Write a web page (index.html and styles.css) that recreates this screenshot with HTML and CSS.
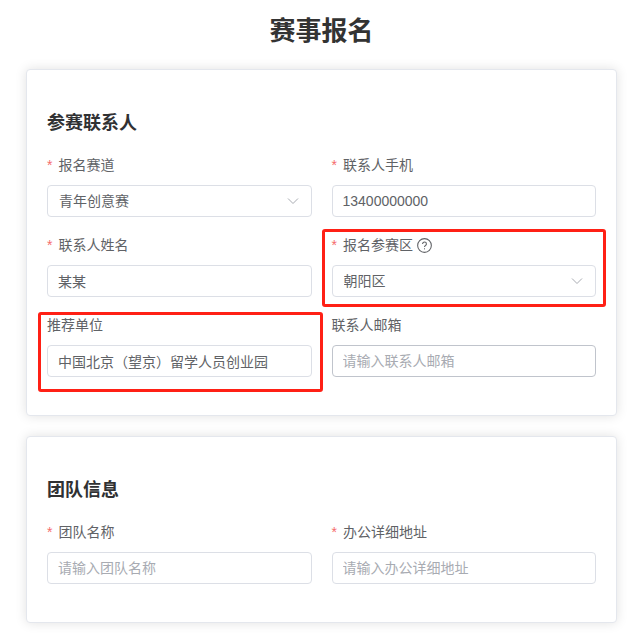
FILE: index.html
```html
<!DOCTYPE html>
<html lang="zh-CN">
<head>
    <meta charset="UTF-8">
    <meta name="viewport" content="width=device-width, initial-scale=1.0">
    <title>赛事报名</title>
    <link rel="stylesheet" href="styles.css">
</head>
<body>
    <h1>赛事报名</h1>
    <form id="entryForm">
        <section class="card">
            <h2>参赛联系人</h2>
            <div class="fields">
                <div class="field">
                    <label class="required" for="track">报名赛道</label>
                    <div class="select">
                        <select id="track" name="track" required>
                            <option selected>青年创意赛</option>
                        </select>
                        <svg class="arrow" viewBox="0 0 14 14" aria-hidden="true"><path d="M2 4.5 7 9.5 12 4.5"/></svg>
                    </div>
                </div>
                <div class="field">
                    <label class="required" for="phone">联系人手机</label>
                    <input type="tel" id="phone" name="phone" value="13400000000" required>
                </div>
                <div class="field">
                    <label class="required" for="contact">联系人姓名</label>
                    <input type="text" id="contact" name="contact" value="某某" required>
                </div>
                <div class="field marked">
                    <label class="required" for="region">报名参赛区
                        <svg class="help" viewBox="0 0 14 14" aria-hidden="true">
                            <circle cx="7" cy="7" r="6.4"/>
                            <path d="M5.2 5.7C5.2 4.5 6 3.8 7 3.8s1.8.7 1.8 1.7c0 .8-.4 1.1-.9 1.5-.6.4-.9.7-.9 1.4"/>
                            <path d="M7 9.6v1"/>
                        </svg>
                    </label>
                    <div class="select">
                        <select id="region" name="region" required>
                            <option selected>朝阳区</option>
                        </select>
                        <svg class="arrow" viewBox="0 0 14 14" aria-hidden="true"><path d="M2 4.5 7 9.5 12 4.5"/></svg>
                    </div>
                </div>
                <div class="field marked marked-low">
                    <label for="referrer">推荐单位</label>
                    <input type="text" id="referrer" name="referrer" value="中国北京（望京）留学人员创业园">
                </div>
                <div class="field">
                    <label for="email">联系人邮箱</label>
                    <input class="active" type="email" id="email" name="email" placeholder="请输入联系人邮箱">
                </div>
            </div>
        </section>

        <section class="card">
            <h2>团队信息</h2>
            <div class="fields">
                <div class="field">
                    <label class="required" for="team">团队名称</label>
                    <input type="text" id="team" name="team" placeholder="请输入团队名称" required>
                </div>
                <div class="field">
                    <label class="required" for="address">办公详细地址</label>
                    <input type="text" id="address" name="address" placeholder="请输入办公详细地址" required>
                </div>
            </div>
        </section>
    </form>
</body>
</html>
```
FILE: styles.css
```css
* {
    box-sizing: border-box;
}
body {
    margin: 0;
    padding: 13px 24px 15px 26px;
    background: #fff;
    color: #303133;
    font-family: "Liberation Sans", "Noto Sans CJK SC", sans-serif;
    font-size: 14px;
}
h1 {
    margin: 0 0 20px;
    font-size: 26px;
    line-height: 36px;
    text-align: center;
    color: #333;
}
.card {
    padding: 20px 20px 38px;
    border: 1px solid #e4e7ed;
    border-radius: 4px;
    background: #fff;
    box-shadow: 0 0 12px rgba(0, 0, 0, 0.12);
}
.card + .card {
    margin-top: 20px;
}
h2 {
    margin: 20px 0 18px;
    font-size: 18px;
    line-height: 26px;
}
.fields {
    display: grid;
    grid-template-columns: 1fr 1fr;
    gap: 17px 20px;
}
.field {
    position: relative;
    min-width: 0;
}
label {
    display: flex;
    align-items: center;
    margin-bottom: 9px;
    line-height: 22px;
    color: #606266;
}
.required::before {
    content: "*";
    margin-right: 6px;
    color: #f56c6c;
}
.help {
    width: 15px;
    height: 15px;
    margin-left: 4px;
    fill: none;
    stroke: #606266;
    stroke-width: 1;
}
input, select {
    display: block;
    width: 100%;
    height: 32px;
    padding: 0 11px;
    border: 1px solid #dcdfe6;
    border-radius: 4px;
    outline: none;
    background: #fff;
    color: #606266;
    font: inherit;
}
input {
    padding: 0 10px;
}
input.active {
    border-color: #c0c4cc;
}
input:focus, select:focus {
    border-color: #409eff;
}
input::placeholder {
    color: #a8abb2;
    opacity: 1;
}
select {
    appearance: none;
}
.select {
    position: relative;
}
.arrow {
    position: absolute;
    top: 9px;
    right: 12px;
    width: 14px;
    height: 14px;
    fill: none;
    stroke: #a8abb2;
    stroke-width: 1;
    pointer-events: none;
}
/* red frame over a field that needs attention */
.marked::after {
    content: "";
    position: absolute;
    inset: -5px -10px -10px;
    border: 3px solid #ff2015;
    border-radius: 3px;
    pointer-events: none;
}
.marked-low::after {
    inset: -2px -11px -15px -9px;
}
```
